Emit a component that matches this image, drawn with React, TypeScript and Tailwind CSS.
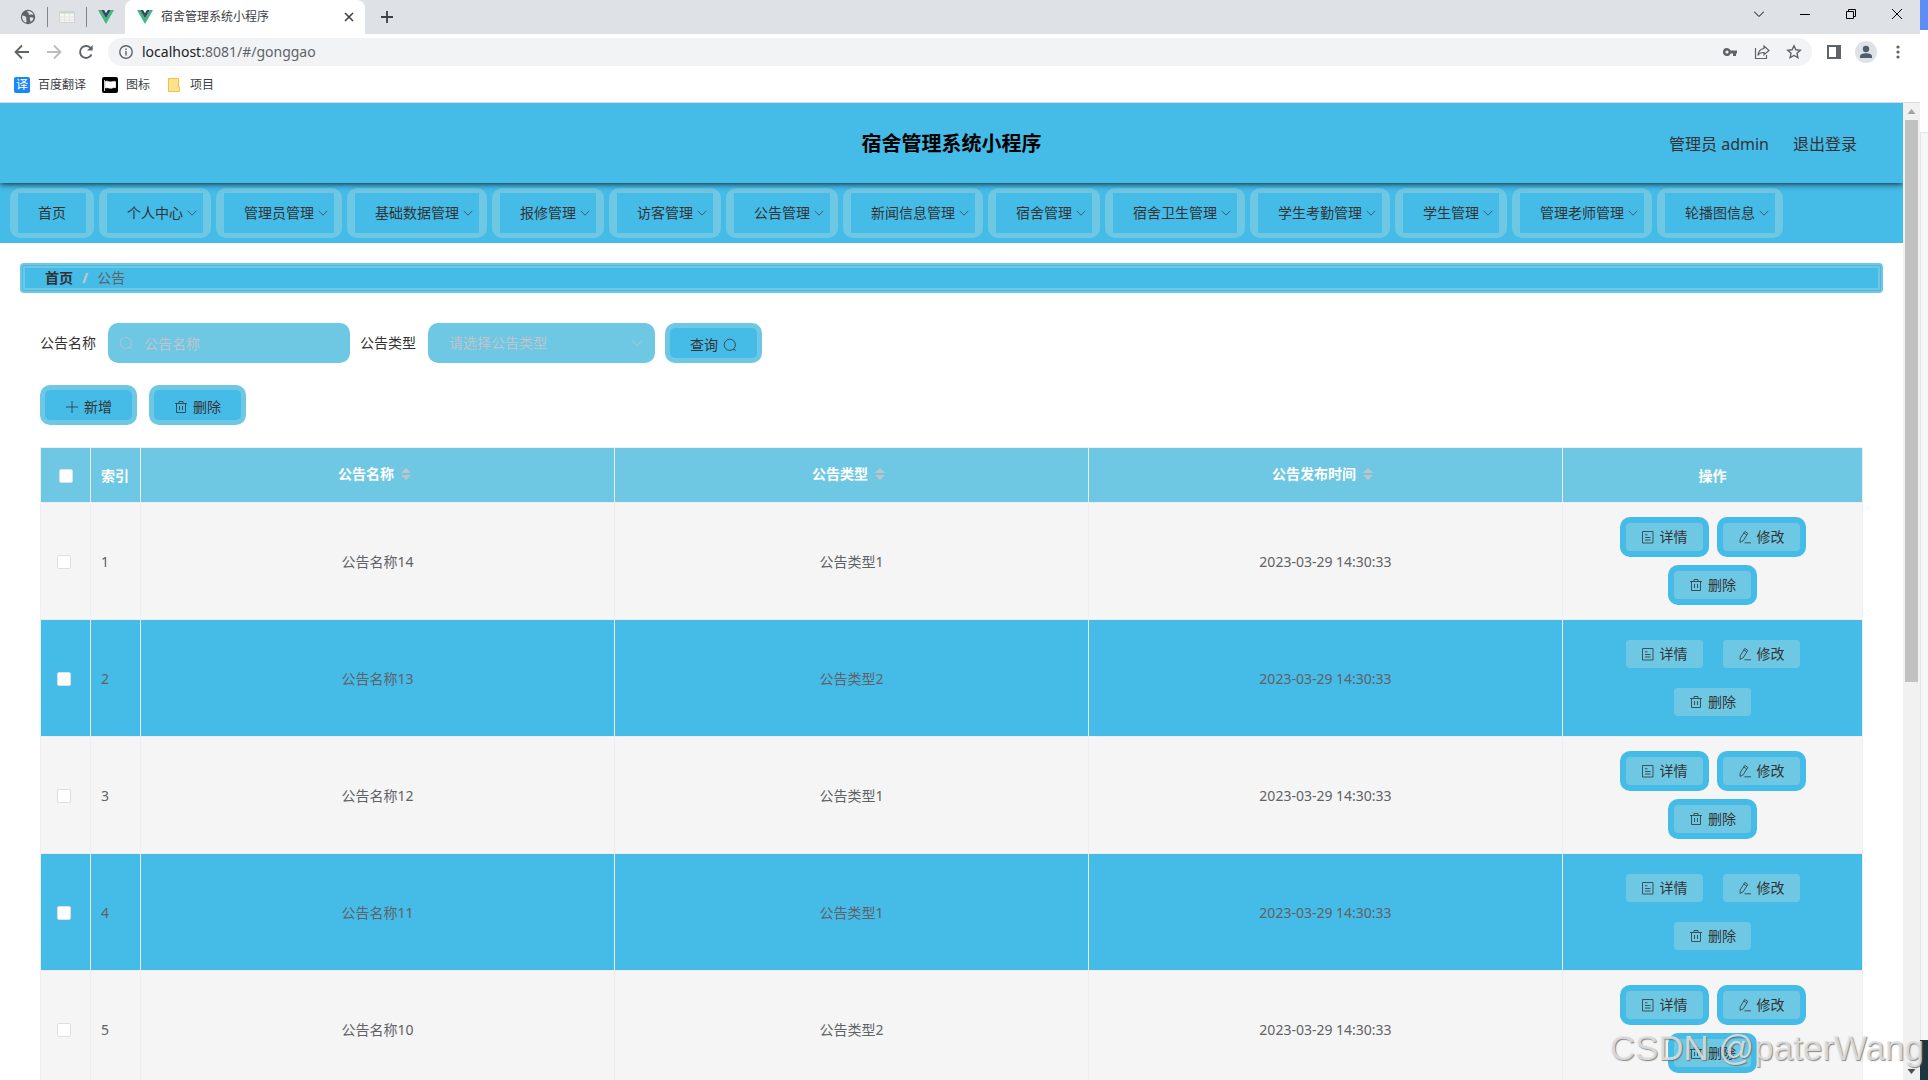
import type { ReactNode } from 'react'

const menus = [
  '首页',
  '个人中心',
  '管理员管理',
  '基础数据管理',
  '报修管理',
  '访客管理',
  '公告管理',
  '新闻信息管理',
  '宿舍管理',
  '宿舍卫生管理',
  '学生考勤管理',
  '学生管理',
  '管理老师管理',
  '轮播图信息',
]

const rows = [
  { id: 1, name: '公告名称14', type: '公告类型1', time: '2023-03-29 14:30:33' },
  { id: 2, name: '公告名称13', type: '公告类型2', time: '2023-03-29 14:30:33' },
  { id: 3, name: '公告名称12', type: '公告类型1', time: '2023-03-29 14:30:33' },
  { id: 4, name: '公告名称11', type: '公告类型1', time: '2023-03-29 14:30:33' },
  { id: 5, name: '公告名称10', type: '公告类型2', time: '2023-03-29 14:30:33' },
]

function Icon({ className = 'size-3.5', children }: { className?: string; children: ReactNode }) {
  return (
    <svg viewBox="0 0 14 14" fill="none" stroke="currentColor" strokeWidth="0.8" className={`shrink-0 ${className}`} aria-hidden="true">
      {children}
    </svg>
  )
}

const ArrowDown = ({ className }: { className?: string }) => (
  <Icon className={className}><path d="M2 4.500l5 5 5-5" /></Icon>
)

const SearchIcon = () => (
  <Icon><circle cx="6.800" cy="6.800" r="5.600" /><path d="M10.200 11.600h1.600l1 1.200" /></Icon>
)

const PlusIcon = () => (
  <Icon><path d="M7 1v12M1 7h12" /></Icon>
)

const TrashIcon = () => (
  <Icon><path d="M1 3.500h12M5 3.300V1.500h4v1.800M2.500 3.500v9h9v-9M5.500 6v4M8.500 6v4" /></Icon>
)

const DocIcon = () => (
  <Icon><path d="M1.500 1.500h10.500v11.500h-10.500zM4 4.800h2.500M4 7.500h5.500M4 10h5.500" /></Icon>
)

const EditIcon = () => (
  <Icon><path d="M2.200 8.800L6.800 1.400l3 2L5.200 10.800l-3.200 1.600zM5.800 3l3 2M6.500 12.800h6.500" /></Icon>
)

function VueLogo() {
  return (
    <svg viewBox="0 0 16 14" className="h-3.5 w-4 shrink-0" aria-hidden="true">
      <path d="M0 0h3.2L8 8.2 12.8 0H16L8 14z" fill="#41b883" />
      <path d="M3.2 0h2.9L8 3.2 9.9 0h2.9L8 8.2z" fill="#35495e" />
    </svg>
  )
}

function TabStrip() {
  return (
    <div className="flex h-[34px] items-center bg-[#dee1e6] text-xs text-[#3c4043]">
      <div className="flex w-[125px] items-center pl-5">
        <svg viewBox="0 0 16 16" className="size-4" aria-hidden="true">
          <circle cx="8" cy="8" r="7.2" fill="#5f6368" />
          <path d="M2.2 6.5c2 .2 3.2.6 4 2 .6 1.2-.4 1.6.2 2.7.4.9.2 1.6-.4 2.300-2.500-.6-4.300-3-3.800-7zM7 2c.4 1.400 1.800 1.200 1.600 2.400-.2 1.200 1.300 1.600 2.400 1.200l2.700.2C13 3.600 10.500 1.500 7 2zM10 8.500c1.500-.5 3-.2 3.600.5-.4 2-1.600 3.300-3 4 .2-1.700-1.500-2.600-.6-4.500z" fill="#dee1e6" />
        </svg>
        <span className="ml-[11px] h-5 w-px bg-[#80868b]" />
        <svg viewBox="0 0 16 12" className="ml-[11px] h-3 w-4" aria-hidden="true">
          <path d="M.5.5h15v11H.5z" fill="#f4f4f4" stroke="#d3d3d3" />
          <path d="M0 1h16v1.500H0z" fill="#b9dfc0" />
          <path d="M5.500 3v8M10.500 3v8M1 6h14M1 9h14" stroke="#e4e4e4" />
        </svg>
        <span className="mr-[11px] ml-[11px] h-5 w-px bg-[#80868b]" />
        <VueLogo />
      </div>
      <div className="flex h-full w-60 items-center rounded-t-lg bg-white pr-[11px] pl-3">
        <VueLogo />
        <span className="ml-2 flex-1">宿舍管理系统小程序</span>
        <button type="button" aria-label="关闭标签页">
          <svg viewBox="0 0 10 10" className="size-2.5" stroke="#3c4043" strokeWidth="1.600"><path d="M1 1l8 8M9 1L1 9" /></svg>
        </button>
      </div>
      <button type="button" aria-label="新标签页" className="ml-4">
        <svg viewBox="0 0 12 12" className="size-3" stroke="#3c4043" strokeWidth="1.800"><path d="M6 0v12M0 6h12" /></svg>
      </button>
      <div className="ml-auto flex items-center gap-9 pr-[18px] pb-1.5 text-black">
        <svg viewBox="0 0 10 10" className="size-2.5" fill="none" stroke="currentColor"><path d="M0 2.500l5 5 5-5" /></svg>
        <svg viewBox="0 0 10 10" className="size-2.5" fill="none" stroke="currentColor"><path d="M0 5.500h10" /></svg>
        <svg viewBox="0 0 10 10" className="size-2.5" fill="none" stroke="currentColor"><path d="M.5 2.500h7v7h-7zM2.500 2.500v-2h7v7h-2" /></svg>
        <svg viewBox="0 0 10 10" className="size-2.5" fill="none" stroke="currentColor"><path d="M0 0l10 10M10 0L0 10" /></svg>
      </div>
    </div>
  )
}

function AddressBar() {
  return (
    <div className="flex h-9 items-center bg-white pr-4 pl-3.5 text-[#5f6368]">
      <svg viewBox="0 0 16 16" className="size-4" fill="none" stroke="currentColor" strokeWidth="1.800"><path d="M15 8H2M8 1.500L1.500 8 8 14.500" /></svg>
      <svg viewBox="0 0 16 16" className="ml-4 size-4" fill="none" stroke="#babcbe" strokeWidth="1.800"><path d="M1 8h13M8 1.500L14.500 8 8 14.500" /></svg>
      <svg viewBox="0 0 16 16" className="ml-4 size-4" fill="none" stroke="currentColor" strokeWidth="1.900">
        <path d="M13.500 10.500A6 6 0 1 1 12.300 3.700L14 5.400" />
        <path d="M14.600 1v5.600H9z" fill="currentColor" stroke="none" />
      </svg>
      <div className="ml-3.5 flex h-7 flex-1 items-center rounded-full bg-[#f1f3f4] pr-2.5 pl-[11px]">
        <svg viewBox="0 0 14 14" className="size-3.5" fill="none" stroke="currentColor" strokeWidth="1.400">
          <circle cx="7" cy="7" r="6.200" /><path d="M7 6v4.500M7 3.500v1.400" />
        </svg>
        <span className="ml-[9px] flex-1 text-sm"><span className="text-[#202124]">localhost</span>:8081/#/gonggao</span>
        <svg viewBox="0 0 16 16" className="size-4" fill="currentColor">
          <path d="M5 4a4 4 0 1 0 3.700 5.400H11V12h3V9.400h1V6.600H8.700A4 4 0 0 0 5 4zm0 2.400a1.600 1.600 0 1 1 0 3.200 1.600 1.600 0 0 1 0-3.200z" />
        </svg>
        <svg viewBox="0 0 16 16" className="ml-4 size-4" fill="none" stroke="currentColor" strokeWidth="1.200">
          <path d="M1.500 4v10.500h11V11M10 2l5 4.500-5 4.300V8.500C7 8.300 5 9.500 4 11.500c.3-4 2.500-6.500 6-7z" />
        </svg>
        <svg viewBox="0 0 16 16" className="ml-4 size-4" fill="none" stroke="currentColor" strokeWidth="1.400">
          <path d="M8 1.800l1.900 4 4.400.5-3.300 3 .9 4.400L8 11.500l-3.900 2.200.9-4.400-3.300-3 4.400-.5z" />
        </svg>
      </div>
      <svg viewBox="0 0 14 14" className="ml-[15px] size-3.5"><path d="M1 1h12v12H1z" fill="none" stroke="currentColor" strokeWidth="2" /><path d="M9 1h4v12H9z" fill="currentColor" /></svg>
      <svg viewBox="0 0 22 22" className="ml-3.5 size-[22px]">
        <circle cx="11" cy="11" r="11" fill="#dee1e6" />
        <circle cx="11" cy="8" r="3.200" fill="#4d5c70" />
        <path d="M5 17v-1.500C5 13 8.500 12.300 11 12.300s6 .7 6 3.200V17z" fill="#4d5c70" />
      </svg>
      <svg viewBox="0 0 12 16" className="ml-[15px] h-4 w-3" fill="currentColor"><circle cx="6" cy="3" r="1.600" /><circle cx="6" cy="8" r="1.600" /><circle cx="6" cy="13" r="1.600" /></svg>
    </div>
  )
}

function Bookmarks() {
  return (
    <div className="flex h-[33px] items-center border-b border-[#dadce0] bg-white pb-0.5 pl-3.5 text-xs text-[#3c4043]">
      <a href="#fanyi" className="flex items-center gap-2">
        <span className="flex size-4 items-center justify-center rounded-xs bg-[#1a86f8] text-xs text-white">译</span>
        百度翻译
      </a>
      <a href="#tubiao" className="ml-4 flex items-center gap-2">
        <svg viewBox="0 0 16 16" className="size-4"><rect width="16" height="16" rx="2" fill="#000" /><path d="M2.500 3v11M3.500 4.500c2-1.200 4 1 5.800.4 1.500-.5 2.700-.7 4.200-.2v6c-1.500-.5-3 .3-4.200.5-2 .3-3.800-1.200-5.800-.2z" fill="#fff" stroke="#fff" strokeWidth=".8" /></svg>
        图标
      </a>
      <a href="#xiangmu" className="ml-[18px] flex items-center gap-2.5">
        <svg viewBox="0 0 12 14" className="h-3.5 w-3"><path d="M.5.5h10v8.500h1v4.500H.5z" fill="#ffe28a" stroke="#e8c14f" /></svg>
        项目
      </a>
    </div>
  )
}

function Header() {
  return (
    <header className="relative grid h-20 grid-cols-[1fr_auto_1fr] items-center bg-[#45bbe8] pt-0.5 shadow-[0_1px_6px_rgba(0,0,0,0.8)]">
      <h1 className="col-start-2 text-xl font-bold text-black">宿舍管理系统小程序</h1>
      <div className="flex justify-end gap-6 pr-[46px] text-base text-[#333]">
        <span>管理员 admin</span>
        <a href="#logout">退出登录</a>
      </div>
    </header>
  )
}

function NavMenu() {
  return (
    <nav className="flex h-[60px] items-start gap-[5px] bg-[#45bbe8] px-2.5 pt-[5px] text-sm text-[#333]">
      {menus.map((menu, i) => (
        <a key={menu} href="#menu" className="shrink-0 rounded-[10px] bg-[#6ec8e3] px-2 py-[5px]">
          <span className={`flex h-10 items-center bg-[#45bbe8] pl-5 ${i === 0 ? 'pr-5' : 'pr-[5px]'}`}>
            {menu}
            {i > 0 && <ArrowDown className="ml-[3px] size-3" />}
          </span>
        </a>
      ))}
    </nav>
  )
}

function Breadcrumb() {
  return (
    <div className="mx-5 mt-5 flex h-[30px] items-center rounded-sm border-5 border-double border-[#6ec8e3] bg-[#45bbe8] pl-5 text-sm">
      <a href="#home" className="font-bold text-[#303133]">首页</a>
      <span className="mx-[9px] font-black text-[#c0c4cc]">/</span>
      <span className="text-[#606266]">公告</span>
    </div>
  )
}

function ToolButton({ children }: { children: ReactNode }) {
  return (
    <button type="button" className="rounded-[10px] bg-[#6ec8e3] p-[5px] text-sm text-[#333]">
      <span className="flex h-[30px] items-center gap-[5px] rounded-[5px] bg-[#45bbe8] px-5 pt-[3px]">{children}</span>
    </button>
  )
}

function SearchForm() {
  return (
    <form className="flex items-center text-sm text-[#333]" onSubmit={(e) => e.preventDefault()}>
      <label htmlFor="name">公告名称</label>
      <div className="relative ml-3 w-[242px] text-[#c0c4cc]">
        <input
          id="name"
          placeholder="公告名称"
          className="h-10 w-full rounded-[10px] bg-[#6ec8e3] pr-4 pl-9 outline-none placeholder:text-[#c0c4cc]"
        />
        <span className="absolute top-[13px] left-[11px]"><SearchIcon /></span>
      </div>
      <label htmlFor="type" className="ml-2.5">公告类型</label>
      <div className="relative ml-3 w-[227px] text-[#c0c4cc]">
        <select id="type" className="h-10 w-full appearance-none rounded-[10px] bg-[#6ec8e3] pl-[21px] outline-none">
          <option>请选择公告类型</option>
        </select>
        <span className="pointer-events-none absolute top-[13px] right-[11px]"><ArrowDown className="size-3.5" /></span>
      </div>
      <div className="ml-2.5">
        <ToolButton>查询<SearchIcon /></ToolButton>
      </div>
    </form>
  )
}

function Checkbox({ label }: { label: string }) {
  return (
    <input type="checkbox" aria-label={label} className="block size-3.5 appearance-none rounded-xs border border-[#dcdfe6] bg-white" />
  )
}

function SortTh({ title }: { title: string }) {
  return (
    <th className="border-r border-b border-[#ebeef5] pr-1.5 pb-0.5">
      <span className="flex items-center justify-center gap-[7px]">
        {title}
        <svg viewBox="0 0 10 12" className="h-3 w-2.5" fill="#c0c4cc" aria-hidden="true"><path d="M5 0l5 5H0zM0 7h10l-5 5z" /></svg>
      </span>
    </th>
  )
}

function RowButton({ children }: { children: ReactNode }) {
  return (
    <button type="button" className="rounded-[10px] bg-[#45bbe8] p-1.5 text-[#333]">
      <span className="flex h-7 items-center gap-[5px] rounded-sm bg-[#6ec8e3] px-[15px]">{children}</span>
    </button>
  )
}

function NoticeTable() {
  return (
    <table className="mt-[22px] w-full table-fixed border-separate border-spacing-0 border-t border-l border-[#ebeef5] text-sm text-[#606266]">
      <colgroup>
        <col className="w-[50px]" />
        <col className="w-[50px]" />
        <col />
        <col />
        <col />
        <col className="w-[300px]" />
      </colgroup>
      <thead>
        <tr className="h-[55px] bg-[#6ec8e3] font-bold text-white">
          <th className="border-r border-b border-[#ebeef5] pt-0.5 pl-[18px]"><Checkbox label="全选" /></th>
          <th className="border-r border-b border-[#ebeef5] pt-0.5 pl-2.5 text-left">索引</th>
          <SortTh title="公告名称" />
          <SortTh title="公告类型" />
          <SortTh title="公告发布时间" />
          <th className="border-r border-b border-[#ebeef5] pt-0.5">操作</th>
        </tr>
      </thead>
      <tbody>
        {rows.map((row) => (
          <tr key={row.id} className="bg-[#f5f5f5] text-center even:bg-[#45bbe8]">
            <td className="border-r border-b border-[#ebeef5] pt-0.5 pl-4"><Checkbox label={row.name} /></td>
            <td className="border-r border-b border-[#ebeef5] pt-0.5 pl-2.5 text-left">{row.id}</td>
            <td className="border-r border-b border-[#ebeef5] pt-0.5">{row.name}</td>
            <td className="border-r border-b border-[#ebeef5] pt-0.5">{row.type}</td>
            <td className="border-r border-b border-[#ebeef5] pt-0.5">{row.time}</td>
            <td className="border-r border-b border-[#ebeef5] px-10 py-3.5">
              <div className="flex flex-wrap justify-center gap-2">
                <RowButton><DocIcon />详情</RowButton>
                <RowButton><EditIcon />修改</RowButton>
                <RowButton><TrashIcon />删除</RowButton>
              </div>
            </td>
          </tr>
        ))}
      </tbody>
    </table>
  )
}

function Scrollbar() {
  return (
    <div className="flex w-[17px] shrink-0 flex-col items-center bg-[#f1f1f1]">
      <svg viewBox="0 0 17 17" className="size-[17px]"><path d="M8.500 6L12.500 11h-8z" fill="#a3a3a3" /></svg>
      <div className="h-[562px] w-[13px] bg-[#c1c1c1]" />
      <svg viewBox="0 0 17 17" className="mt-auto size-[17px]"><path d="M4.500 6h8l-4 5z" fill="#505050" /></svg>
    </div>
  )
}

export default function App() {
  return (
    <div className="relative flex h-screen overflow-hidden bg-white font-['Noto_Sans','Noto_Sans_CJK_SC',sans-serif]">
      <div className="flex min-w-0 flex-1 flex-col">
        <TabStrip />
        <AddressBar />
        <Bookmarks />
        <div className="flex min-h-0 flex-1">
          <main className="min-w-0 flex-1 overflow-hidden">
            <Header />
            <NavMenu />
            <Breadcrumb />
            <div className="px-10 pt-[30px]">
              <SearchForm />
              <div className="mt-[22px] flex gap-3">
                <ToolButton><PlusIcon />新增</ToolButton>
                <ToolButton><TrashIcon />删除</ToolButton>
              </div>
              <NoticeTable />
            </div>
          </main>
          <Scrollbar />
        </div>
      </div>
      <div className="flex w-2 shrink-0 flex-col">
        <div className="h-[30px] bg-[#5f8df8]" />
        <div className="h-[102px] bg-white" />
        <div className="flex-1 border-t border-l border-[#e3e5e9] bg-[#f5f6f8]" />
        <div className="h-10 bg-[#1f3640]" />
      </div>
      <div className="pointer-events-none absolute right-1 bottom-2 font-['Liberation_Sans',sans-serif] text-[35px] leading-12 text-[#e4e4e4]/85 [text-shadow:1px_1px_1px_rgba(90,90,90,0.7)]">
        CSDN @paterWang
      </div>
    </div>
  )
}
